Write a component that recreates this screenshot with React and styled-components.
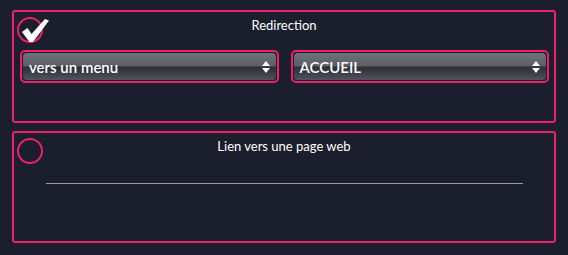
import React from "react";
import styled, { createGlobalStyle } from "styled-components";

const GlobalStyle = createGlobalStyle`
  html, body {
    margin: 0;
    padding: 0;
    background: #1a1e2d;
    font-family: Lato, "Open Sans", sans-serif;
    color: #fff;
  }
`;

const Page = styled.div`
  padding: 10px 12px;
  display: flex;
  flex-direction: column;
  gap: 8px;
`;

const Panel = styled.div`
  border: 2px solid #ef1f68;
  border-radius: 3px;
  padding: 5px 3px 0;
  height: ${(p) => p.$height}px;
  box-sizing: border-box;
`;

const Header = styled.div`
  display: grid;
  grid-template-columns: 26px 1fr 26px;
  align-items: start;
`;

const Radio = styled.div`
  position: relative;
  width: 26px;
  height: 26px;
  box-sizing: border-box;
  border: 2px solid #ef1f68;
  border-radius: 50%;

  svg {
    position: absolute;
    left: 1px;
    top: -1px;
  }
`;

const Title = styled.div`
  text-align: center;
  font-size: 13px;
  line-height: 16px;
  padding-top: 0;
`;

const SelectRow = styled.div`
  display: grid;
  grid-template-columns: 1fr 1fr;
  gap: 12px;
  margin: 7px 2px 0 3px;
`;

const SelectFrame = styled.div`
  border: 2px solid #ef1f68;
  border-radius: 5px;
  padding: 1px;
  background: #1a1e2d;
`;

const SelectBox = styled.div`
  height: 27px;
  border-radius: 4px;
  display: flex;
  align-items: center;
  justify-content: space-between;
  padding: 0 6px 0 6px;
  background: linear-gradient(
    to bottom,
    #70727a 0%,
    #5c5e66 48%,
    #2c2e36 52%,
    #3d3f48 75%,
    #52545d 100%
  );
  font-size: 15px;
  font-weight: 600;
  color: #fff;
`;

const Arrows = styled.span`
  display: flex;
  flex-direction: column;
  gap: 2px;
`;

const UrlInput = styled.div`
  margin: 17px 28px 0 29px;
  border-bottom: 1px solid #9c9c9c;
  height: 2px;
`;

function Check() {
  return (
    <svg width="30" height="26" viewBox="0 0 30 26">
      <path
        d="M2 14 L7.5 10 L11.5 16 L25 1 L29 2.5 L13 24 L9.5 24 Z"
        fill="#fff"
      />
    </svg>
  );
}

function UpDown() {
  return (
    <Arrows>
      <svg width="8" height="5" viewBox="0 0 8 5">
        <path d="M4 0 L8 5 L0 5 Z" fill="#fff" />
      </svg>
      <svg width="8" height="5" viewBox="0 0 8 5">
        <path d="M0 0 L8 0 L4 5 Z" fill="#fff" />
      </svg>
    </Arrows>
  );
}

function Select({ value }) {
  return (
    <SelectFrame>
      <SelectBox>
        <span>{value}</span>
        <UpDown />
      </SelectBox>
    </SelectFrame>
  );
}

export default function App() {
  return (
    <>
      <GlobalStyle />
      <Page>
        <Panel $height={113}>
          <Header>
            <Radio>
              <Check />
            </Radio>
            <Title>Redirection</Title>
            <span />
          </Header>
          <SelectRow>
            <Select value="vers un menu" />
            <Select value="ACCUEIL" />
          </SelectRow>
        </Panel>
        <Panel $height={112}>
          <Header>
            <Radio />
            <Title>Lien vers une page web</Title>
            <span />
          </Header>
          <UrlInput />
        </Panel>
      </Page>
    </>
  );
}
